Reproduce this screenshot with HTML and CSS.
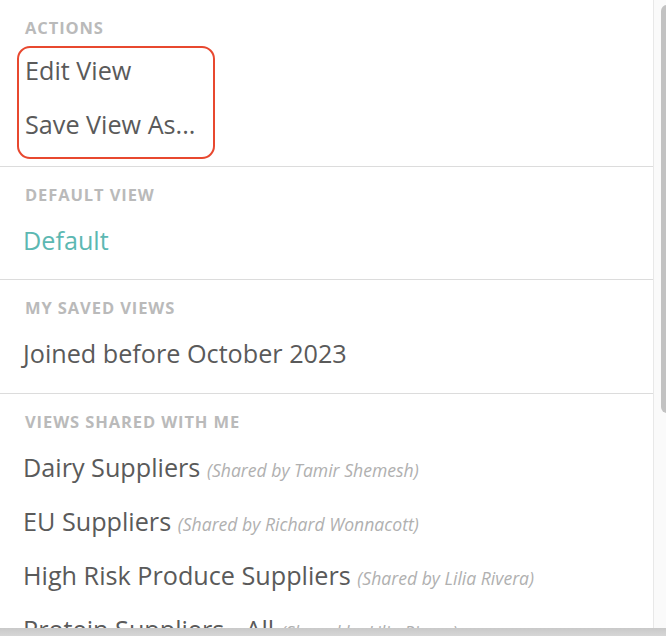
FILE: index.html
```html
<!DOCTYPE html>
<html lang="en">
<head>
<meta charset="utf-8">
<title>Views</title>
<link rel="stylesheet" href="styles.css">
</head>
<body>
<div class="frame">
  <div class="panel">
    <section class="group">
      <h3 class="group-title">Actions</h3>
      <div class="actions-box">
        <div class="item">Edit View</div>
        <div class="item">Save View As...</div>
      </div>
    </section>
    <section class="group">
      <h3 class="group-title">Default View</h3>
      <div class="item item-active">Default</div>
    </section>
    <section class="group">
      <h3 class="group-title">My Saved Views</h3>
      <div class="item">Joined before October 2023</div>
    </section>
    <section class="group">
      <h3 class="group-title">Views Shared With Me</h3>
      <div class="item">Dairy Suppliers <span class="shared">(Shared by Tamir Shemesh)</span></div>
      <div class="item">EU Suppliers <span class="shared">(Shared by Richard Wonnacott)</span></div>
      <div class="item">High Risk Produce Suppliers <span class="shared">(Shared by Lilia Rivera)</span></div>
      <div class="item">Protein Suppliers - All <span class="shared">(Shared by Lilia Rivera)</span></div>
    </section>
  </div>
  <div class="vscroll">
    <div class="vthumb"></div>
  </div>
</div>
<div class="bottom-bar"></div>
</body>
</html>
```

FILE: styles.css
```css
html, body {
  margin: 0;
  padding: 0;
  height: 100%;
  overflow: hidden;
  background: #ffffff;
  font-family: "Open Sans", "Noto Sans", sans-serif;
}

.frame {
  display: flex;
  height: 628px;
  overflow: hidden;
}

.panel {
  flex: 1;
  min-width: 0;
  overflow: hidden;
}

.group {
  padding: 16px 0 12.5px 0;
  border-bottom: 1px solid #dcdcdc;
}

.group-title {
  margin: 0 0 6px 0;
  padding-left: 25px;
  font-size: 16.5px;
  line-height: 24px;
  font-weight: 700;
  letter-spacing: 0.9px;
  text-transform: uppercase;
  color: #bababa;
}

.actions-box {
  margin: 1px 0 -6px 17px;
  padding-bottom: 1px;
  width: 198px;
  box-sizing: border-box;
  border: 2px solid #e8482f;
  border-radius: 13px;
}

.actions-box .item {
  padding-left: 6px;
  line-height: 44px;
  padding-bottom: 10px;
}

.item {
  padding-left: 23px;
  font-size: 25.2px;
  line-height: 54px;
  color: #5a5a5a;
  white-space: nowrap;
}

.item-active {
  color: #5cb8b2;
}

.shared {
  font-size: 17.6px;
  line-height: 1;
  font-style: italic;
  color: #b0b0b0;
}

.vscroll {
  width: 12px;
  flex: none;
  background: #fafafa;
  border-left: 1px solid #e8e8e8;
  position: relative;
}

.vthumb {
  position: absolute;
  left: 7px;
  top: 5px;
  width: 12px;
  height: 408px;
  border-radius: 6px;
  background: #c2c2c2;
}

.bottom-bar {
  height: 8px;
  background: linear-gradient(#c9c9c9, #d6d6d6);
}
```
